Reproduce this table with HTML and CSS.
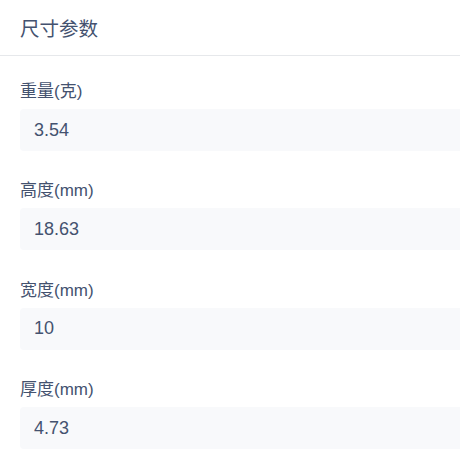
FILE: index.html
```html
<!DOCTYPE html>
<html lang="zh">
<head>
<meta charset="utf-8">
<link rel="stylesheet" href="styles.css">
</head>
<body>
<div class="panel">
  <div class="panel-header">尺寸参数</div>
  <div class="panel-body">
    <div class="field">
      <div class="field-label">重量(克)</div>
      <div class="field-value">3.54</div>
    </div>
    <div class="field">
      <div class="field-label">高度(mm)</div>
      <div class="field-value">18.63</div>
    </div>
    <div class="field">
      <div class="field-label">宽度(mm)</div>
      <div class="field-value">10</div>
    </div>
    <div class="field">
      <div class="field-label">厚度(mm)</div>
      <div class="field-value">4.73</div>
    </div>
  </div>
</div>
</body>
</html>
```
FILE: styles.css
```css
html, body {
  margin: 0;
  padding: 0;
  background: #ffffff;
}
body {
  font-family: "Liberation Sans", "Noto Sans CJK SC", sans-serif;
  color: #3e4c6c;
  overflow: hidden;
}
.panel {
  width: 460px;
}
.panel-header {
  height: 56px;
  box-sizing: border-box;
  border-bottom: 1px solid #e6e8eb;
  padding-left: 20px;
  display: flex;
  align-items: center;
  font-size: 19.5px;
  color: #44526f;
}
.panel-body {
  padding: 24px 0 0 20px;
  display: flex;
  flex-direction: column;
  gap: 28.4px;
}
.field {
  display: flex;
  flex-direction: column;
  gap: 5px;
}
.field-label {
  font-size: 17px;
  line-height: 24px;
  color: #44526f;
}
.field-value {
  height: 42px;
  box-sizing: border-box;
  background: #f8f9fb;
  border-radius: 4px 0 0 4px;
  padding-left: 14px;
  display: flex;
  align-items: center;
  font-size: 18px;
  color: #44526f;
}
```
